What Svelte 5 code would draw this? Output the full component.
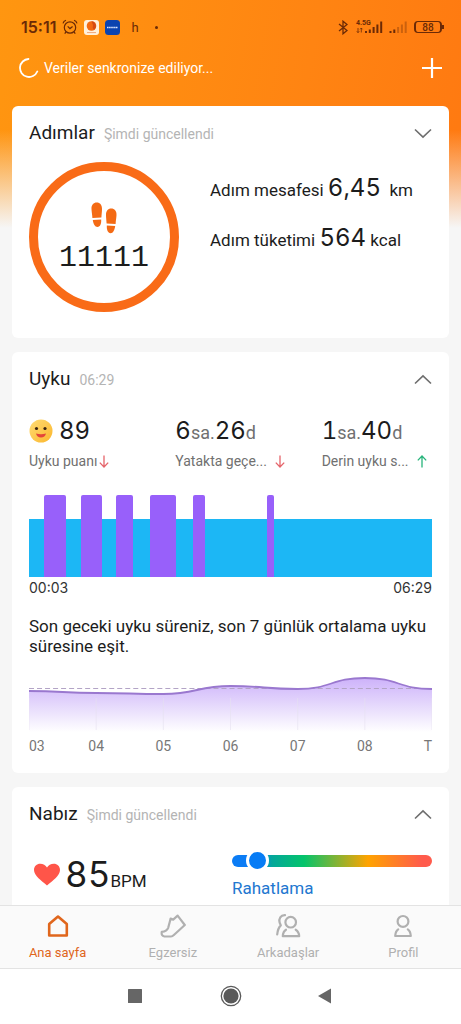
<script lang="ts">
    type Segment = { stage: 'deep' | 'light'; minutes: number };

    const sleepSegments: Segment[] = [
        { stage: 'light', minutes: 15 },
        { stage: 'deep', minutes: 22 },
        { stage: 'light', minutes: 15 },
        { stage: 'deep', minutes: 21 },
        { stage: 'light', minutes: 14 },
        { stage: 'deep', minutes: 17 },
        { stage: 'light', minutes: 17 },
        { stage: 'deep', minutes: 26 },
        { stage: 'light', minutes: 17 },
        { stage: 'deep', minutes: 12 },
        { stage: 'light', minutes: 62 },
        { stage: 'deep', minutes: 7 },
        { stage: 'light', minutes: 158 }
    ];

    const days = ['03', '04', '05', '06', '07', '08', 'T'];

    // Average sleep per day, as heights in the trend chart
    const trend = [23, 25, 26, 18, 21, 10, 21];
    const step = 67;

    const trendLine = trend
        .map((y, i) => {
            if (i === 0) return `M0 ${y}`;
            const x = i * step;
            return `C${x - step / 2} ${trend[i - 1]} ${x - step / 2} ${y} ${x} ${y}`;
        })
        .join(' ');

    let heartZone = $state(8);
    let activeTab = $state('home');

    const tabs = [
        { id: 'home', label: 'Ana sayfa' },
        { id: 'workout', label: 'Egzersiz' },
        { id: 'friends', label: 'Arkadaşlar' },
        { id: 'profile', label: 'Profil' }
    ];
</script>

{#snippet chevron(label: string, down: boolean)}
    <button class="chevron" class:down aria-label={label}>
        <svg width="18" height="11" viewBox="0 0 18 11" fill="none" stroke="#6e6e6e" stroke-width="1.6">
            <path d="M1 9.5L9 1.8L17 9.5" />
        </svg>
    </button>
{/snippet}

{#snippet arrow(up: boolean)}
    <svg class="arrow" class:up width="10" height="13" viewBox="0 0 10 13" fill="none" stroke="currentColor" stroke-width="1.3">
        <path d="M5 0.5V12M0.8 7.6L5 12L9.2 7.6" />
    </svg>
{/snippet}

<div class="screen">
    <div class="status-bar">
        <span class="clock">15:11</span>
        <svg class="alarm" width="16" height="16" viewBox="0 0 16 16" fill="none" stroke="currentColor" stroke-width="1.2">
            <circle cx="8" cy="8.5" r="5.7" />
            <path d="M5.7 7.3L8 9.6L10.6 7.6M1 4.3C1.4 2.8 2.6 1.7 4 1.2M15 4.3C14.6 2.8 13.4 1.7 12 1.2M4 13L2.7 14.6M12 13L13.3 14.6" />
        </svg>
        <svg width="15" height="15" viewBox="0 0 15 15">
            <rect width="15" height="15" rx="3" fill="#fff1dc" />
            <circle cx="7.5" cy="6" r="4.8" fill="#f36a12" />
            <path d="M7.5 1.2A4.8 4.8 0 0 1 10 9.8Q8 8 9 5Z" fill="#d44b14" />
            <path d="M3 12.6H12" stroke="#f0a67b" stroke-width="1" />
        </svg>
        <svg width="15" height="15" viewBox="0 0 15 15">
            <rect width="15" height="15" rx="3.5" fill="#0b43b0" />
            <path d="M2 7.5H13" stroke="#dce6ff" stroke-width="1.5" stroke-dasharray="1.6 0.5" />
        </svg>
        <span class="letter">h</span>
        <span class="dot"></span>
        <span class="spacer"></span>
        <svg width="10" height="15" viewBox="0 0 10 15" fill="none" stroke="currentColor" stroke-width="1.3">
            <path d="M1 4L9 10.5L5 13.8V1.2L9 4.5L1 11" />
        </svg>
        <div class="network">
            <span>4.5G</span>
            <svg width="27" height="13" viewBox="0 0 27 13" fill="currentColor">
                <path d="M2 7V11.5M0.8 10.3L2 11.7L3.2 10.3M5.3 11.5V7M4.1 8.3L5.3 7L6.5 8.3" fill="none" stroke="currentColor" stroke-width="0.8" />
                <path d="M9 10h2v2H9zM12.8 8.4h2V12h-2zM16.6 6h2v6h-2zM20.4 3.4h2V12h-2zM24.2 0.5h2V12h-2z" />
            </svg>
        </div>
        <svg class="sim" width="18" height="13" viewBox="0 0 18 13" fill="currentColor">
            <path d="M0.5 10h2v2h-2zM4.3 8.4h2V12h-2z" />
            <path opacity="0.35" d="M8.1 6h2v6h-2zM11.9 3.4h2V12h-2zM15.7 0.5h2V12h-2z" />
        </svg>
        <div class="battery"><span>88</span></div>
    </div>

    <header class="sync-bar">
        <svg width="20" height="20" viewBox="0 0 20 20" fill="none" stroke="#fff" stroke-width="1.8" stroke-linecap="round">
            <path d="M9.5 1A9 9 0 1 0 18.3 13.5" />
        </svg>
        <span>Veriler senkronize ediliyor...</span>
        <button class="add" aria-label="Ekle">
            <svg width="20" height="20" viewBox="0 0 20 20" stroke="#fff" stroke-width="2.2">
                <path d="M10 0V20M0 10H20" />
            </svg>
        </button>
    </header>

    <main>
        <section class="card steps">
            <div class="card-head">
                <h2>Adımlar</h2>
                <span class="updated">Şimdi güncellendi</span>
                {@render chevron('Adımlar', true)}
            </div>
            <div class="steps-body">
                <div class="ring">
                    <svg width="26" height="32" viewBox="0 0 26 32" fill="#f46a14">
                        <path d="M0.5 7C0.3 3 2.5 0.5 5.8 0.5S11 3 11 7C11 10 10.6 12 10.4 15.6L1.4 16C1.2 12 0.6 10 0.5 7Z" />
                        <path d="M1.8 18L10.2 17.6C10.4 22 9.2 25 6.5 25S2.4 22 1.8 18Z" />
                        <path d="M25.5 13C25.7 9 23.5 6.5 20.2 6.5S15 9 15 13C15 16 15.4 18 15.6 21.6L24.6 22C24.8 18 25.4 16 25.5 13Z" />
                        <path d="M24.2 24L15.8 23.6C15.6 28 16.8 31.2 19.5 31.2S23.6 28 24.2 24Z" />
                    </svg>
                    <span>11111</span>
                </div>
                <div class="step-facts">
                    <p>Adım mesafesi <b>6,45</b>&nbsp; km</p>
                    <p>Adım tüketimi <b>564</b> kcal</p>
                </div>
            </div>
        </section>

        <section class="card sleep">
            <div class="card-head">
                <h2>Uyku</h2>
                <span class="updated">06:29</span>
                {@render chevron('Uyku', false)}
            </div>
            <div class="metrics">
                <div class="metric">
                    <div class="value">
                        <svg class="face" width="24" height="24" viewBox="0 0 24 24">
                            <defs>
                                <linearGradient id="face" x1="0" y1="0" x2="1" y2="1">
                                    <stop offset="0" stop-color="#ffdc75" />
                                    <stop offset="1" stop-color="#fbb62c" />
                                </linearGradient>
                            </defs>
                            <circle cx="12" cy="12" r="11.5" fill="url(#face)" />
                            <circle cx="7.5" cy="9.5" r="1.6" fill="#3b2410" />
                            <circle cx="16" cy="9.5" r="1.6" fill="#3b2410" />
                            <path d="M7 14.5Q12 15.8 17 14.5Q16 18.5 12 18.5T7 14.5Z" fill="#e4453a" />
                        </svg>
                        <b>89</b>
                    </div>
                    <div class="caption">Uyku puanı{@render arrow(false)}</div>
                </div>
                <div class="metric">
                    <div class="value"><b>6</b>sa.<b>26</b>d</div>
                    <div class="caption wide">Yatakta geçe...{@render arrow(false)}</div>
                </div>
                <div class="metric">
                    <div class="value"><b>1</b>sa.<b>40</b>d</div>
                    <div class="caption wide">Derin uyku s...{@render arrow(true)}</div>
                </div>
            </div>

            <div class="stages">
                {#each sleepSegments as segment}
                    <div class={segment.stage} style="flex-grow: {segment.minutes}"></div>
                {/each}
            </div>
            <div class="stage-times">
                <span>00:03</span>
                <span>06:29</span>
            </div>

            <p class="summary">Son geceki uyku süreniz, son 7 günlük ortalama uyku süresine eşit.</p>

            <svg class="trend" viewBox="0 0 402 66" preserveAspectRatio="none">
                <defs>
                    <linearGradient id="trend-fill" x1="0" y1="10" x2="0" y2="64" gradientUnits="userSpaceOnUse">
                        <stop offset="0" stop-color="#cdb2fa" />
                        <stop offset="0.5" stop-color="#e5d8fc" />
                        <stop offset="1" stop-color="#fff" />
                    </linearGradient>
                </defs>
                <path d="{trendLine} V66 H0 Z" fill="url(#trend-fill)" />
                {#each days as _, i}
                    <path d="M{i * step} 30V62" stroke="#e6e0f0" stroke-width="0.6" />
                {/each}
                <path d="M0 20.5H402" stroke="#b3a4c6" stroke-width="1" stroke-dasharray="5 3" />
                <path d={trendLine} fill="none" stroke="#9a78cf" stroke-width="1.8" />
            </svg>
            <div class="days">
                {#each days as day}
                    <span>{day}</span>
                {/each}
            </div>
        </section>

        <section class="card pulse">
            <div class="card-head">
                <h2>Nabız</h2>
                <span class="updated">Şimdi güncellendi</span>
                {@render chevron('Nabız', false)}
            </div>
            <div class="pulse-body">
                <div class="bpm">
                    <svg width="28" height="23" viewBox="0 0 28 23" fill="#ff5549">
                        <path d="M14 22.5C8 17.5 1 12.5 1 7C1 3.2 3.8 0.8 7.2 0.8C10.2 0.8 12.6 2.2 14 4.6C15.4 2.2 17.8 0.8 20.8 0.8C24.2 0.8 27 3.2 27 7C27 12.5 20 17.5 14 22.5Z" />
                    </svg>
                    <p><b>85</b>BPM</p>
                </div>
                <div class="zone">
                    <input id="zone" type="range" min="0" max="100" bind:value={heartZone} />
                    <label for="zone">Rahatlama</label>
                </div>
            </div>
        </section>
    </main>

    <nav class="tabs">
        {#each tabs as tab}
            <button class:active={activeTab === tab.id} onclick={() => (activeTab = tab.id)}>
                <svg width="26" height="26" viewBox="0 0 26 26" fill="none" stroke="currentColor" stroke-width="2.2" stroke-linejoin="round" stroke-linecap="round">
                    {#if tab.id === 'home'}
                        <path d="M4.2 11L13 3.5L21.8 11V22.5H4.2Z" stroke-width="2.6" />
                    {:else if tab.id === 'workout'}
                        <path d="M1.8 18.8Q6.8 18.3 8.2 14.8L10.2 7.2L10.6 5.6L13.2 6.6L17.6 2.6L24.8 12L13.6 22.2Q12.6 23.5 11 23.5H4.4Q1 23 1.8 18.8Z" />
                    {:else if tab.id === 'friends'}
                        <circle cx="15.7" cy="9.2" r="5.3" />
                        <path d="M11 16.7C8.8 18 8 20 7.8 23.2H24.2C24 20 23 18 20.7 16.7M10 2.2C5.5 2 3.7 5.8 4.6 9.5L5.8 12.4C3.6 14.5 2.6 17.5 2.2 21.5" />
                    {:else}
                        <circle cx="13" cy="8.4" r="5.4" />
                        <path d="M8.2 16.4C6 17.8 5.4 20 5.2 23H20.8C20.6 20 20 17.8 17.8 16.4" />
                    {/if}
                </svg>
                {tab.label}
            </button>
        {/each}
    </nav>

    <div class="system-nav">
        <button aria-label="Son uygulamalar">
            <svg width="22" height="22" viewBox="0 0 22 22"><rect x="3" y="4" width="14" height="14" rx="0.5" fill="#666" /></svg>
        </button>
        <button aria-label="Ana ekran">
            <svg width="22" height="22" viewBox="0 0 22 22">
                <circle cx="11" cy="11" r="9.7" fill="none" stroke="#5a5a5a" stroke-width="1.3" />
                <circle cx="11" cy="11" r="7.6" fill="#5a5a5a" />
            </svg>
        </button>
        <button aria-label="Geri">
            <svg width="22" height="22" viewBox="0 0 22 22"><path d="M3 11L16 3.5V18.5Z" fill="#666" /></svg>
        </button>
    </div>
</div>

<style>
    :global(body) {
        margin: 0;
    }

    .screen {
        display: flex;
        flex-direction: column;
        height: 100vh;
        overflow: hidden;
        box-sizing: border-box;
        font-family: Roboto, 'Noto Sans', sans-serif;
        color: #1c1c1c;
        background:
            linear-gradient(to bottom, rgba(246, 246, 246, 0) 130px, #f6f6f6 228px),
            linear-gradient(100deg, #ff9610 0%, #ff8412 50%, #ff7010 100%);
    }

    button {
        padding: 0;
        border: none;
        background: none;
        font: inherit;
        color: inherit;
        cursor: pointer;
    }

    svg {
        display: block;
        flex-shrink: 0;
    }

    b {
        font-family: Inter, sans-serif;
        font-weight: 400;
        font-feature-settings: 'tnum';
    }

    .status-bar {
        display: flex;
        align-items: center;
        gap: 6px;
        height: 30px;
        padding: 12px 19px 0 21px;
        color: #6b2a06;
    }

    .clock {
        font-family: Inter, sans-serif;
        font-size: 16px;
        font-weight: 600;
    }

    .letter {
        margin-left: 5px;
        font-size: 13px;
    }

    .dot {
        width: 3px;
        height: 3px;
        margin-left: 10px;
        border-radius: 50%;
        background: #6b2a06;
    }

    .spacer {
        flex: 1;
    }

    .network {
        position: relative;
        margin-left: 2px;
    }

    .network span {
        position: absolute;
        top: -2px;
        left: 0;
        font-size: 7px;
        line-height: 8px;
        font-weight: 700;
    }

    .battery {
        position: relative;
        width: 24px;
        height: 10px;
        margin-left: 1px;
        border: 1px solid #6b2a06;
        border-width: 1px 2px;
        border-radius: 4px;
        font-size: 10px;
        line-height: 11px;
        font-weight: 500;
        text-align: center;
    }

    .battery::after {
        content: '';
        position: absolute;
        top: 3px;
        right: -4px;
        width: 2px;
        height: 4px;
        background: #6b2a06;
    }

    .sync-bar {
        display: flex;
        align-items: center;
        gap: 5px;
        height: 52px;
        padding: 0 19px;
        font-size: 14px;
        color: #fff;
    }

    .add {
        margin-left: auto;
    }

    main {
        display: flex;
        flex: 1;
        flex-direction: column;
        gap: 14px;
        min-height: 0;
        overflow: hidden;
        padding: 12px 12px 0;
    }

    .card {
        flex-shrink: 0;
        padding: 14px 17px 26px;
        border-radius: 6px;
        background: #fff;
    }

    .card-head {
        display: flex;
        align-items: baseline;
        gap: 9px;
        height: 26px;
        line-height: 26px;
    }

    h2 {
        margin: 0;
        font-size: 19px;
        font-weight: 400;
    }

    .updated {
        font-size: 14px;
        color: #b4b4b4;
    }

    .chevron {
        align-self: center;
        margin-left: auto;
    }

    .chevron.down {
        transform: rotate(180deg);
    }

    .steps-body {
        display: flex;
        gap: 31px;
        margin-top: 16px;
    }

    .ring {
        display: flex;
        flex-direction: column;
        align-items: center;
        flex-shrink: 0;
        gap: 8px;
        box-sizing: border-box;
        width: 150px;
        height: 150px;
        padding-top: 31px;
        border: 9px solid #f96b17;
        border-radius: 50%;
    }

    .ring span {
        font-family: 'Liberation Mono', monospace;
        font-size: 30px;
        line-height: 32px;
    }

    .step-facts {
        padding-top: 10px;
    }

    .step-facts p {
        margin: 0 0 18px;
        font-size: 17px;
        line-height: 32px;
        height: 32px;
        white-space: nowrap;
    }

    .step-facts b {
        font-size: 24px;
        line-height: 32px;
    }

    .metrics {
        display: grid;
        grid-template-columns: repeat(3, 1fr);
        gap: 36px;
        margin-top: 23px;
        color: #707070;
    }

    .metric {
        white-space: nowrap;
    }

    .value {
        display: flex;
        align-items: baseline;
        height: 32px;
        font-size: 18px;
        line-height: 32px;
    }

    .value b {
        font-size: 24px;
        color: #1c1c1c;
    }

    .face {
        align-self: center;
        margin-right: 6px;
    }

    .caption {
        display: flex;
        align-items: center;
        gap: 2px;
        font-size: 14px;
        line-height: 20px;
        padding-top: 4px;
    }

    .caption.wide {
        gap: 8px;
    }

    .arrow {
        color: #e5646a;
    }

    .arrow.up {
        color: #27b47b;
        transform: rotate(180deg);
    }

    .stages {
        display: flex;
        align-items: flex-end;
        height: 82px;
        margin-top: 24px;
    }

    .stages div {
        flex-basis: 0;
    }

    .deep {
        height: 82px;
        border-radius: 2px 2px 0 0;
        background: #9860fa;
    }

    .light {
        height: 58px;
        background: #1cb7f5;
    }

    .stage-times {
        display: flex;
        justify-content: space-between;
        font-family: Inter, sans-serif;
        font-size: 14px;
        line-height: 22px;
        color: #333;
    }

    .summary {
        margin: 17px 0 0;
        font-size: 17px;
        line-height: 20px;
    }

    .trend {
        width: 100%;
        height: 66px;
        margin-top: 12px;
    }

    .days {
        display: flex;
        margin-top: 2px;
        font-size: 14px;
        line-height: 20px;
        color: #777;
    }

    .days span {
        flex: 2 0 0;
        text-align: center;
    }

    .days span:first-child {
        flex-grow: 1;
        text-align: left;
    }

    .days span:last-child {
        flex-grow: 1;
        text-align: right;
    }

    .sleep {
        padding-bottom: 17px;
    }

    .pulse-body {
        display: flex;
        justify-content: space-between;
        margin-top: 22px;
    }

    .bpm {
        display: flex;
        align-items: center;
        gap: 4px;
        height: 50px;
        padding-left: 4px;
        font-size: 17px;
        line-height: 50px;
    }

    .bpm p {
        height: 50px;
        margin: 0;
    }

    .bpm b {
        font-size: 35px;
    }

    .zone {
        display: flex;
        flex-direction: column;
        gap: 6px;
        width: 50%;
        max-width: 200px;
        color: #2277d0;
        font-size: 17px;
        line-height: 20px;
    }

    .zone input {
        appearance: none;
        width: 100%;
        height: 23px;
        margin: 0;
        background: none;
    }

    .zone input::-webkit-slider-runnable-track {
        height: 12px;
        border-radius: 6px;
        background: linear-gradient(to right, #0b7cf5 13%, #04a79a 20%, #04c46b 36%, #ffa300 68%, #ff5b4c 95%);
    }

    .zone input::-webkit-slider-thumb {
        appearance: none;
        box-sizing: border-box;
        width: 23px;
        height: 23px;
        margin-top: -6px;
        border: 3px solid #fff;
        border-radius: 50%;
        background: #077cf5;
    }

    .tabs {
        display: grid;
        grid-template-columns: repeat(4, 1fr);
        border-top: 1px solid #e3e3e3;
        border-bottom: 1px solid #e3e3e3;
        background: #fafafa;
    }

    .tabs button {
        display: flex;
        flex-direction: column;
        align-items: center;
        gap: 5px;
        padding: 7px 0 6px;
        font-size: 13px;
        line-height: 18px;
        color: #b0b0b0;
    }

    .tabs .active {
        color: #e0661c;
    }

    .system-nav {
        display: flex;
        justify-content: center;
        gap: 73px;
        padding: 16px 0 17px;
        background: #fff;
    }
</style>
